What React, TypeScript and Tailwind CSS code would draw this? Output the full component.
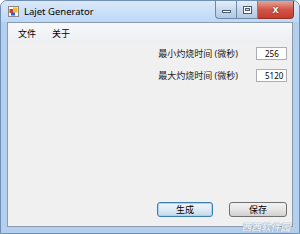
import React from 'react'

const ui = { fontFamily: '"Noto Sans", "Noto Sans CJK SC", sans-serif' }

function AppIcon() {
  return (
    <svg width="11" height="11" viewBox="0 0 11 11" className="shrink-0">
      <rect x="0.5" y="0.5" width="10" height="10" fill="#f4f4f4" stroke="#8a8a8a" />
      <rect x="1.5" y="3" width="3.5" height="4" fill="#d63a2a" />
      <rect x="5" y="1.5" width="4.5" height="5" fill="#f0c020" />
      <rect x="3" y="6.5" width="4" height="3" fill="#2a64c8" />
    </svg>
  )
}

function CaptionButtons() {
  return (
    <div className="flex self-start">
      <div className="w-[22px] h-[18px] border border-[#6d89aa] border-t-0 rounded-bl-[4px] bg-gradient-to-b from-[#e6eef8] via-[#c9d9ec] to-[#b2c8e2] flex items-center justify-center">
        <div className="w-[9px] h-[3px] bg-white border border-[#4a5d74] mt-[4px]" />
      </div>
      <div className="w-[21px] h-[18px] border-y border-r border-[#6d89aa] border-t-0 bg-gradient-to-b from-[#e6eef8] via-[#c9d9ec] to-[#b2c8e2] flex items-center justify-center">
        <div className="w-[9px] h-[8px] border border-[#4a5d74] bg-white flex items-center justify-center">
          <div className="w-[5px] h-[3px] border border-[#4a5d74] bg-[#c9d9ec]" />
        </div>
      </div>
      <div className="w-[36px] h-[18px] border-y border-r border-[#8a3328] border-t-0 rounded-br-[4px] bg-gradient-to-b from-[#e9a394] via-[#d0564a] to-[#c83b2c] flex items-center justify-center">
        <span className="text-white text-[11px] font-bold leading-none" style={{ fontFamily: '"Liberation Sans", sans-serif', textShadow: '0 0 2px #5a1a10' }}>
          x
        </span>
      </div>
    </div>
  )
}

function Field({ label, value }: { label: string; value: string }) {
  return (
    <div className="flex items-center justify-end gap-[18px] h-[13px]">
      <span className="text-[9px] leading-none text-[#1a1a1a] whitespace-nowrap">{label}</span>
      <div className="w-[31px] h-[13px] bg-white border border-[#abadb3] flex items-center pl-[8px]">
        <span className="text-[8px] leading-none text-black">{value}</span>
      </div>
    </div>
  )
}

export default function App() {
  return (
    <div className="w-[300px] h-[234px] bg-white overflow-hidden relative" style={ui}>
      <div className="w-[300px] h-[234px] flex flex-col border border-[#6f8fb3] rounded-t-[7px] bg-[#b4cfee] px-[6px] pb-[6px]">
        {/* Title bar */}
        <div className="h-[21px] flex items-center bg-gradient-to-b from-[#dbe8f8] to-[#bcd8f9] -mx-[6px] pl-[7px] pr-[5px] rounded-t-[6px]">
          <AppIcon />
          <span className="ml-[5px] text-[9.5px] text-black leading-none">Lajet Generator</span>
          <div className="flex-1" />
          <CaptionButtons />
        </div>

        {/* Client area */}
        <div className="flex-1 flex flex-col bg-[#f0f0f0] border border-[#8b9bae]">
          {/* Menu bar */}
          <div className="h-[20px] flex items-center gap-[16px] pl-[10px] bg-gradient-to-b from-[#f7f8fa] to-[#eceef2]">
            <span className="text-[9px] leading-none text-black">文件</span>
            <span className="text-[9px] leading-none text-black">关于</span>
          </div>

          {/* Fields */}
          <div className="flex flex-col gap-[9px] mt-[4px] pr-[5px]">
            <Field label="最小灼烧时间 (微秒)" value="256" />
            <Field label="最大灼烧时间 (微秒)" value="5120" />
          </div>

          <div className="flex-1" />

          {/* Buttons */}
          <div className="flex justify-end gap-[16px] pr-[5px] pb-[9px]">
            <button className="w-[56px] h-[15px] rounded-[3px] border border-[#3c7fb1] bg-gradient-to-b from-[#f2f8fd] via-[#dfeaf4] to-[#c6d9ea] shadow-[inset_0_0_0_1px_#a6d4f0] flex items-center justify-center">
              <span className="text-[9px] leading-none text-black">生成</span>
            </button>
            <button className="w-[58px] h-[15px] rounded-[3px] border border-[#707070] bg-gradient-to-b from-[#f2f2f2] via-[#e6e6e6] to-[#d0d0d0] flex items-center justify-center">
              <span className="text-[9px] leading-none text-black">保存</span>
            </button>
          </div>
        </div>
      </div>

      {/* Watermark */}
      <div className="absolute right-[10px] bottom-[2px] text-[10px] font-bold italic text-white/80 leading-none tracking-tight" style={{ textShadow: '0 0 1px #8aa0b8, 0 0 1px #8aa0b8' }}>
        西西软件园
      </div>
    </div>
  )
}
